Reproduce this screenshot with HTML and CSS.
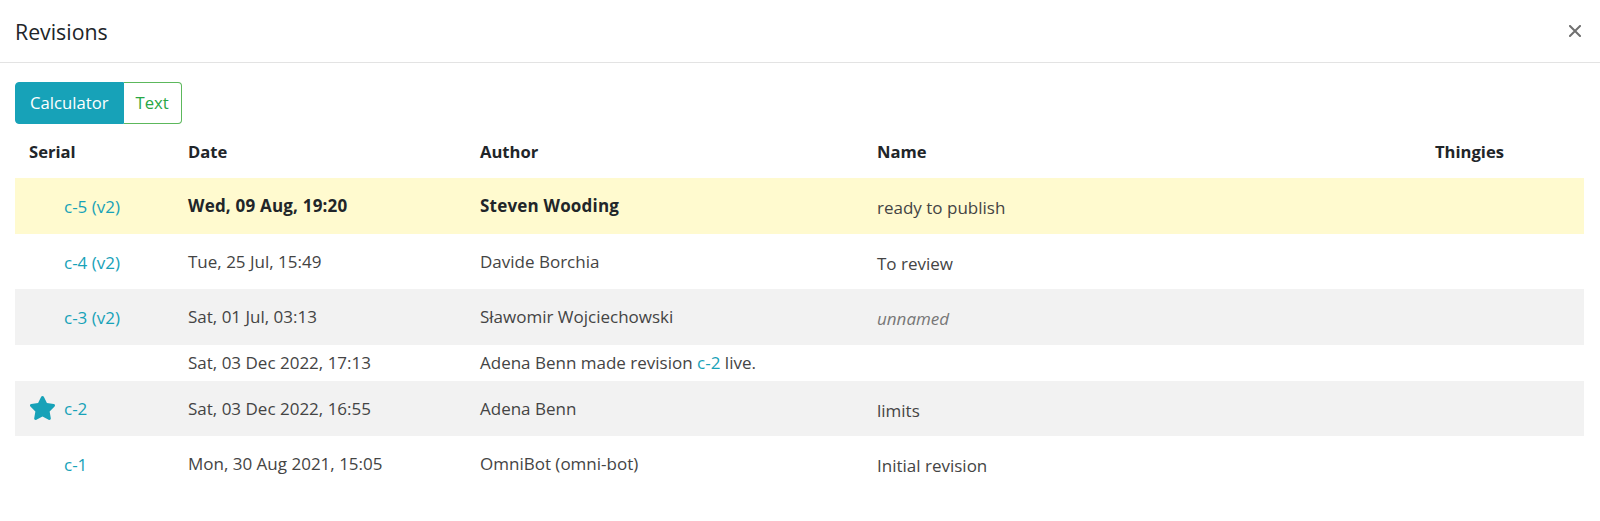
FILE: index.html
```html
<!DOCTYPE html>
<html>
<head>
<meta charset="utf-8">
<link rel="stylesheet" href="styles.css">
</head>
<body>
<div class="modal">
  <div class="modal-header">
    <h4 class="title">Revisions</h4>
    <button class="close" aria-label="Close">
      <svg width="12" height="12" viewBox="0 0 12 12"><path d="M1 1L11 11M11 1L1 11" stroke="#707070" stroke-width="2" stroke-linecap="square"/></svg>
    </button>
  </div>
  <div class="modal-body">
    <div class="btn-group">
      <button class="btn btn-active">Calculator</button>
      <button class="btn btn-outline">Text</button>
    </div>
    <table class="rev-table">
      <colgroup>
        <col class="c-serial"><col class="c-date"><col class="c-author"><col class="c-name"><col class="c-thing">
      </colgroup>
      <thead>
        <tr><th>Serial</th><th>Date</th><th>Author</th><th>Name</th><th>Thingies</th></tr>
      </thead>
      <tbody>
        <tr class="rev current">
          <td><span class="slot"></span><a class="link">c-5 (v2)</a></td>
          <td class="bold">Wed, 09 Aug, 19:20</td>
          <td class="bold">Steven Wooding</td>
          <td><span class="name">ready to publish</span></td>
          <td></td>
        </tr>
        <tr class="rev">
          <td><span class="slot"></span><a class="link">c-4 (v2)</a></td>
          <td>Tue, 25 Jul, 15:49</td>
          <td>Davide Borchia</td>
          <td><span class="name">To review</span></td>
          <td></td>
        </tr>
        <tr class="rev grey">
          <td><span class="slot"></span><a class="link">c-3 (v2)</a></td>
          <td>Sat, 01 Jul, 03:13</td>
          <td>Sławomir Wojciechowski</td>
          <td><span class="name unnamed">unnamed</span></td>
          <td></td>
        </tr>
        <tr class="event">
          <td></td>
          <td>Sat, 03 Dec 2022, 17:13</td>
          <td colspan="3">Adena Benn made revision <a class="link">c-2</a> live.</td>
        </tr>
        <tr class="rev grey">
          <td><span class="slot"><svg class="star" width="27" height="26" viewBox="0 0 576 512"><path fill="#17a2b8" d="M259.3 17.8L194 150.2 47.9 171.5c-26.2 3.8-36.7 36.1-17.7 54.6l105.7 103-25 145.5c-4.5 26.3 23.2 46 46.4 33.7L288 439.6l130.7 68.7c23.2 12.2 50.9-7.4 46.4-33.7l-25-145.5 105.7-103c19-18.5 8.5-50.8-17.7-54.6L382 150.2 316.7 17.8c-11.7-23.6-45.6-23.9-57.4 0z"/></svg></span><a class="link">c-2</a></td>
          <td>Sat, 03 Dec 2022, 16:55</td>
          <td>Adena Benn</td>
          <td><span class="name">limits</span></td>
          <td></td>
        </tr>
        <tr class="rev">
          <td><span class="slot"></span><a class="link">c-1</a></td>
          <td>Mon, 30 Aug 2021, 15:05</td>
          <td>OmniBot (omni-bot)</td>
          <td><span class="name">Initial revision</span></td>
          <td></td>
        </tr>
      </tbody>
    </table>
  </div>
</div>
</body>
</html>
```
FILE: styles.css
```css
html, body {
  margin: 0;
  padding: 0;
  background: #fff;
}
body {
  font-family: "Open Sans", "Noto Sans", "Liberation Sans", sans-serif;
  font-size: 17px;
  color: #444;
}
.modal {
  width: 1600px;
}
.modal-header {
  height: 63px;
  border-bottom: 1px solid #e3e3e3;
  display: flex;
  align-items: center;
  justify-content: space-between;
  padding: 0 19px 0 15px;
  box-sizing: border-box;
}
.title {
  margin: 0;
  font-size: 21.3px;
  font-weight: 400;
  color: #212529;
}
.close {
  border: 0;
  background: none;
  padding: 0;
  width: 12px;
  height: 12px;
  display: flex;
  align-items: center;
  justify-content: center;
}
.modal-body {
  padding: 19px 16px 15px 15px;
}
.btn-group {
  display: flex;
}
.btn {
  font-family: inherit;
  font-size: 16.7px;
  height: 42px;
  cursor: pointer;
  line-height: 1;
}
.btn-active {
  background: #17a2b8;
  color: #fff;
  border: 1px solid #17a2b8;
  border-radius: 4px 0 0 4px;
  padding: 0 14px;
}
.btn-outline {
  background: #fff;
  color: #28a745;
  border: 1px solid #5cb85c;
  border-left: 0;
  border-radius: 0 4px 4px 0;
  padding: 0 12px;
}
.rev-table {
  width: 1569px;
  table-layout: fixed;
  border-collapse: collapse;
}
.c-serial { width: 159px; }
.c-date { width: 292px; }
.c-author { width: 397px; }
.c-name { width: 558px; }
.c-thing { width: 163px; }
th {
  text-align: left;
  font-weight: 700;
  color: #212529;
  height: 54px;
  padding: 0 0 0 14px;
  vertical-align: middle;
  font-size: 16.6px;
}
td {
  padding: 0 0 0 14px;
  height: 55.5px;
  vertical-align: middle;
  white-space: nowrap;
}
tr.current td { background: #fffacf; }
tr.grey td { background: #f2f2f2; }
tr.event td { height: 36px; }
.bold {
  font-weight: 700;
  color: #212529;
  letter-spacing: 0.2px;
}
.name {
  display: inline-block;
  padding-top: 4px;
}
.unnamed {
  font-style: italic;
  color: #777;
}
.link {
  color: #17a2b8;
  text-decoration: none;
}
.slot {
  display: inline-block;
  width: 35px;
  vertical-align: middle;
}
.slot + .link { vertical-align: middle; }
.star {
  display: block;
}
```
